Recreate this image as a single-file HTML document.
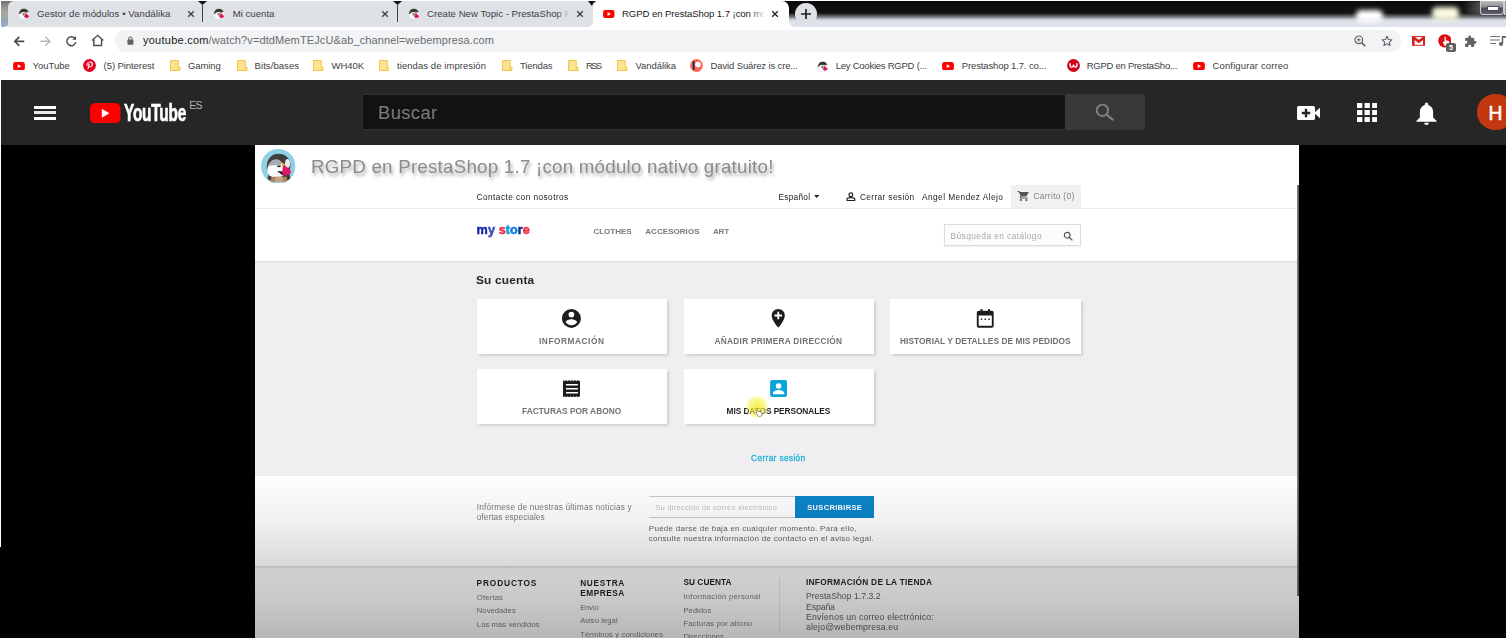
<!DOCTYPE html>
<html><head><meta charset="utf-8"><title>RGPD en PrestaShop 1.7</title>
<style>
*{margin:0;padding:0;box-sizing:border-box}
html,body{width:1506px;height:638px;overflow:hidden;background:#000;font-family:"Liberation Sans",sans-serif}
.a{position:absolute}
.t{position:absolute;white-space:nowrap;line-height:1}
#video{left:255px;top:145px;width:1044px;height:493px;background:#fff;overflow:hidden}
#vin{filter:blur(.4px)}
</style></head><body>
<div class="a" style="left:0px;top:0px;width:1506px;height:80px;background:#fff;"></div>
<div class="a" style="left:1px;top:1px;width:1505px;height:26px;background:#dee1e6;"></div>
<div class="a" style="left:1px;top:1px;width:12px;height:26px;background:linear-gradient(#6f6f6f 0,#9b9c9a 30%,#a9aaa6 50%,#94a0b6 78%,#9db4dc 100%);"></div>
<div class="a" style="left:8px;top:1px;width:12px;height:26px;background:#dee1e6;border-radius:6px 0 0 0"></div>
<svg class="a" style="left:4px;top:21px;" width="5" height="6" viewBox="0 0 5 6"><path d="M5 0v6H0C3 5.500 4.800 3.500 5 0z" fill="#dee1e6"/></svg>
<div class="a" style="left:786px;top:15px;width:12px;height:13px;background:#fff;"></div>
<div class="a" style="left:789px;top:1px;width:717px;height:26px;background:linear-gradient(#0b0b0b 0,#121212 46%,#6d7075 60%,#cfd3da 72%,#dfe4ec 80%,#dde2ea 100%);border-radius:0 0 0 6px"></div>
<div class="a" style="left:1356px;top:9.500px;width:27px;height:12px;background:#fff;filter:blur(2.800px);border-radius:5px"></div>
<div class="a" style="left:1432px;top:6.500px;width:27px;height:13px;background:#fbfbe2;filter:blur(2.800px);border-radius:5px"></div>
<div class="a" style="left:1462px;top:1px;width:20px;height:13px;background:linear-gradient(90deg,rgba(150,150,150,0),rgba(150,150,150,.55));filter:blur(1.500px)"></div>
<div class="a" style="left:1480px;top:1px;width:24px;height:13.5px;background:linear-gradient(#bdbdbd,#8a8a8a 48%,#4d4d57 52%,#5e5e66);border:1px solid #cfcfcf;border-top:0;border-radius:0 0 3px 3px"></div>
<div class="a" style="left:1504px;top:1px;width:2px;height:13.5px;background:#9a9a9a;border-left:1px solid #cfcfcf"></div>
<div class="a" style="left:1488.3px;top:7.3px;width:9.4px;height:3px;background:#fff;box-shadow:0 0 0 .8px #3a3f66"></div>
<div class="a" style="left:780px;top:1px;width:12px;height:12px;background:#0c0c0c;"></div>
<div class="a" style="left:593px;top:1px;width:196px;height:27px;background:#fff;border-radius:7px 7px 0 0"></div>
<div class="a" style="left:202px;top:5px;width:1px;height:17px;background:#3c4043;"></div>
<svg class="a" style="left:198px;top:1px;" width="9" height="4" viewBox="0 0 9 4"><path d="M0 0H9L4.5 4Z" fill="#111"/></svg>
<div class="a" style="left:397px;top:5px;width:1px;height:17px;background:#3c4043;"></div>
<svg class="a" style="left:393px;top:1px;" width="9" height="4" viewBox="0 0 9 4"><path d="M0 0H9L4.5 4Z" fill="#111"/></svg>
<svg class="a" style="left:588px;top:1px;" width="8" height="5" viewBox="0 0 8 5"><path d="M0 0H8L5 2.5 4 5Z" fill="#111"/></svg>
<div class="a" style="left:586px;top:20px;width:7px;height:7px;background:#fff;"></div>
<div class="a" style="left:580px;top:19px;width:13px;height:8px;background:#dee1e6;border-radius:0 0 6px 0"></div>
<svg class="a" style="left:18px;top:8px;" width="12" height="12" viewBox="0 0 24 24"><circle cx="12" cy="12" r="11.200" fill="#fbfbfb" stroke="#c3cad2" stroke-width="1"/><path d="M1.800 11C2.500 5 6.500 1.500 12 1.500c4.500 0 8 2.500 9.500 6.500l-6 1.500C12 7 7 7.500 3.500 12.500z" fill="#4a4a4a"/><path d="M5 5.500C7 3 10 2 13 2.300c2.500.300 4.500 1.500 6 3.200L6 8z" fill="#333"/><path d="M8.500 11.500c1.500-1.800 4-2 5.500-.500l-1 3.500-2.500 1z" fill="#777"/><path d="M12 16l2-1 .500 4.500z" fill="#2a2a2a"/><path d="M14.200 8.500l2.800 1.500-2.600 4.500z" fill="#f2a900"/><path d="M16.300 10.500l6.200 6-3 2.800-5 1.200-.800-6.500z" fill="#e6106b"/></svg>
<div class="t" style="left:37.00px;top:9px;font-size:9.6px;letter-spacing:0.080px;color:#3c4043;">Gestor de módulos • Vandálika</div>
<svg class="a" style="left:186.5px;top:10px;" width="8" height="8" viewBox="0 0 8 8"><path d="M1.2000000000000002 1.2000000000000002L6.8 6.8M6.8 1.2000000000000002L1.2000000000000002 6.8" stroke="#3c4043" stroke-width="1.3" fill="none"/></svg>
<svg class="a" style="left:213px;top:8px;" width="12" height="12" viewBox="0 0 24 24"><circle cx="12" cy="12" r="11.200" fill="#fbfbfb" stroke="#c3cad2" stroke-width="1"/><path d="M1.800 11C2.500 5 6.500 1.500 12 1.500c4.500 0 8 2.500 9.500 6.500l-6 1.500C12 7 7 7.500 3.500 12.500z" fill="#4a4a4a"/><path d="M5 5.500C7 3 10 2 13 2.300c2.500.300 4.500 1.500 6 3.200L6 8z" fill="#333"/><path d="M8.500 11.500c1.500-1.800 4-2 5.500-.500l-1 3.500-2.500 1z" fill="#777"/><path d="M12 16l2-1 .500 4.500z" fill="#2a2a2a"/><path d="M14.200 8.500l2.800 1.500-2.600 4.500z" fill="#f2a900"/><path d="M16.300 10.500l6.200 6-3 2.800-5 1.200-.800-6.500z" fill="#e6106b"/></svg>
<div class="t" style="left:232.70px;top:9px;font-size:9.6px;letter-spacing:0.022px;color:#3c4043;">Mi cuenta</div>
<svg class="a" style="left:381px;top:10px;" width="8" height="8" viewBox="0 0 8 8"><path d="M1.2000000000000002 1.2000000000000002L6.8 6.8M6.8 1.2000000000000002L1.2000000000000002 6.8" stroke="#3c4043" stroke-width="1.3" fill="none"/></svg>
<svg class="a" style="left:407.5px;top:8px;" width="12" height="12" viewBox="0 0 24 24"><circle cx="12" cy="12" r="11.200" fill="#fbfbfb" stroke="#c3cad2" stroke-width="1"/><path d="M1.800 11C2.500 5 6.500 1.500 12 1.500c4.500 0 8 2.500 9.500 6.500l-6 1.500C12 7 7 7.500 3.500 12.500z" fill="#4a4a4a"/><path d="M5 5.500C7 3 10 2 13 2.300c2.500.300 4.500 1.500 6 3.200L6 8z" fill="#333"/><path d="M8.500 11.500c1.500-1.800 4-2 5.500-.500l-1 3.500-2.500 1z" fill="#777"/><path d="M12 16l2-1 .500 4.500z" fill="#2a2a2a"/><path d="M14.200 8.500l2.800 1.500-2.600 4.500z" fill="#f2a900"/><path d="M16.300 10.500l6.200 6-3 2.800-5 1.200-.800-6.500z" fill="#e6106b"/></svg>
<div class="a" style="left:427px;top:4px;width:143px;height:20px;overflow:hidden">
<div class="t" style="left:0.00px;top:5px;font-size:9.6px;letter-spacing:0.027px;color:#3c4043;">Create New Topic - PrestaShop Fo</div>
<div class="a" style="right:0;top:0;width:14px;height:20px;background:linear-gradient(90deg,rgba(222,225,230,0),#dee1e6)"></div></div>
<svg class="a" style="left:576px;top:10px;" width="8" height="8" viewBox="0 0 8 8"><path d="M1.2000000000000002 1.2000000000000002L6.8 6.8M6.8 1.2000000000000002L1.2000000000000002 6.8" stroke="#3c4043" stroke-width="1.3" fill="none"/></svg>
<svg class="a" style="left:603px;top:10px;" width="11.5" height="8" viewBox="0 0 24 17"><rect width="24" height="17" rx="4.5" fill="#f00"/><path d="M9.5 4.5v8l7-4z" fill="#fff"/></svg>
<div class="a" style="left:622px;top:4px;width:143px;height:20px;overflow:hidden">
<div class="t" style="left:0.00px;top:5px;font-size:9.6px;letter-spacing:-0.087px;color:#202124;">RGPD en PrestaShop 1.7 ¡con mód</div>
<div class="a" style="right:0;top:0;width:14px;height:20px;background:linear-gradient(90deg,rgba(255,255,255,0),#fff)"></div></div>
<svg class="a" style="left:771px;top:10px;" width="8" height="8" viewBox="0 0 8 8"><path d="M1.2000000000000002 1.2000000000000002L6.8 6.8M6.8 1.2000000000000002L1.2000000000000002 6.8" stroke="#202124" stroke-width="1.3" fill="none"/></svg>
<div class="a" style="left:795px;top:3px;width:22px;height:22px;border-radius:11px;background:#dee1e6"></div>
<svg class="a" style="left:800px;top:8px;" width="12" height="12" viewBox="0 0 12 12"><path d="M6 1v10M1 6h10" stroke="#202124" stroke-width="1.7" fill="none"/></svg>
<svg class="a" style="left:12.7px;top:34.7px;" width="12.6" height="12.6" viewBox="0 0 14 14"><path d="M12.5 7H2.5M7 2L2 7l5 5" stroke="#4a4d51" stroke-width="1.85" fill="none"/></svg>
<svg class="a" style="left:38.7px;top:34.7px;" width="12.6" height="12.6" viewBox="0 0 14 14"><path d="M1.5 7h10M7 2l5 5-5 5" stroke="#b4b7bb" stroke-width="1.6" fill="none"/></svg>
<svg class="a" style="left:64.7px;top:34.7px;" width="12.6" height="12.6" viewBox="0 0 14 14"><path d="M11.3 4.2A5 5 0 1 0 12 8" stroke="#4a4d51" stroke-width="1.6" fill="none"/><path d="M12.3 1.2v4.2H8.1z" fill="#4a4d51"/></svg>
<svg class="a" style="left:90.8px;top:34.3px;" width="13.4" height="12.8" viewBox="0 0 15 15" preserveAspectRatio="none"><path d="M1.2 7.6L7.5 1.6l6.3 6M3.2 6.5v7h8.6v-7" stroke="#4a4d51" stroke-width="1.6" fill="none"/></svg>
<div class="a" style="left:115px;top:30px;width:1286px;height:22px;background:#f1f3f4;border-radius:11px"></div>
<svg class="a" style="left:127px;top:36.3px;" width="6.8" height="8.8" viewBox="0 0 8 10"><rect x="0.5" y="4" width="7" height="6" rx="0.8" fill="#5f6368"/><path d="M2 4.5V3a2 2 0 0 1 4 0v1.5" stroke="#5f6368" stroke-width="1.2" fill="none"/></svg>
<div class="t" style="left:143.00px;top:35px;font-size:11px;letter-spacing:0.252px;color:#202124;">youtube.com</div>
<div class="t" style="left:208.50px;top:35px;font-size:11px;letter-spacing:0.122px;color:#6a6d71;">/watch?v=dtdMemTEJcU&amp;ab_channel=webempresa.com</div>
<svg class="a" style="left:1354px;top:35px;" width="12" height="12" viewBox="0 0 12 12"><circle cx="4.8" cy="4.8" r="3.8" stroke="#5f6368" stroke-width="1.2" fill="none"/><path d="M7.6 7.6L11.3 11.3" stroke="#5f6368" stroke-width="1.5"/><path d="M4.8 3v3.6M3 4.8h3.6" stroke="#5f6368" stroke-width="1"/></svg>
<svg class="a" style="left:1380.5px;top:35px;" width="12" height="12" viewBox="0 0 24 24"><path d="M12 2.5l2.9 6.4 6.9.7-5.2 4.7 1.5 6.9L12 17.6 5.9 21.2l1.5-6.900-5.200-4.700 6.900-.700z" stroke="#5f6368" stroke-width="2.2" fill="none" stroke-linejoin="round"/></svg>
<svg class="a" style="left:1411.8px;top:35.8px;" width="13.6" height="9.9" viewBox="0 0 14 10"><rect x=".5" y=".5" width="13" height="9" fill="#fff" stroke="#d61f1f" stroke-width="1"/><path d="M1.300 9.500V1.300L7 5.600 12.700 1.300v8.200" stroke="#d61f1f" stroke-width="2.700" fill="none"/></svg>
<svg class="a" style="left:1437.6px;top:34.1px;" width="13.6" height="13.6" viewBox="0 0 15 15"><circle cx="7.500" cy="7.500" r="7.300" fill="#e00b0b"/><path d="M7.200 3.200c.400-.700 1.300-.500 1.400.300v3.300l2.700.600c.900.200 1.300.900 1.100 1.800l-.900 3.800H7.200L5.400 9.500c-.500-.800.400-1.500 1.100-.900l.700.700z" fill="#fff"/></svg>
<div class="a" style="left:1446px;top:43px;width:10px;height:9px;background:#5c5f63;border-radius:2px"></div>
<div class="t" style="left:1449.00px;top:44px;font-size:7px;letter-spacing:0.000px;color:#fff;font-weight:700;">5</div>
<svg class="a" style="left:1464px;top:35px;" width="13" height="13" viewBox="0 0 24 24"><path d="M20.500 11H19V7a2 2 0 0 0-2-2h-4V3.500a2.500 2.500 0 0 0-5 0V5H4a2 2 0 0 0-2 2v3.800h1.500a2.700 2.700 0 0 1 0 5.400H2V20a2 2 0 0 0 2 2h3.800v-1.500a2.700 2.700 0 0 1 5.400 0V22H17a2 2 0 0 0 2-2v-4h1.500a2.500 2.500 0 0 0 0-5z" fill="#5f6368"/></svg>
<svg class="a" style="left:1489.5px;top:35px;" width="17" height="12" viewBox="0 0 17 12"><path d="M0 1.500h10M0 5h10M0 8.500h6" stroke="#70757a" stroke-width="1.150"/><path d="M12.500 1v7.500" stroke="#5f6368" stroke-width="1.500"/><circle cx="11" cy="9" r="2" fill="#5f6368"/><path d="M12.500 1h3.500v1.800h-3.500z" fill="#5f6368"/></svg>
<svg class="a" style="left:13px;top:61.7px;" width="12" height="8.3" viewBox="0 0 24 17"><rect width="24" height="17" rx="4.5" fill="#f00"/><path d="M9.5 4.5v8l7-4z" fill="#fff"/></svg>
<div class="t" style="left:32.50px;top:61px;font-size:9.5px;letter-spacing:-0.022px;color:#3c4043;">YouTube</div>
<svg class="a" style="left:83px;top:59.2px;" width="13" height="13" viewBox="0 0 26 26"><circle cx="13" cy="13" r="12.800" fill="#e60023"/><path d="M13.300 5.500c-4.200 0-6.400 2.900-6.400 5.500 0 1.500.6 2.900 1.900 3.400.200.100.400 0 .500-.200l.200-.800c.100-.200 0-.300-.100-.500-.400-.500-.600-1-.600-1.900 0-2.400 1.800-4.500 4.600-4.500 2.500 0 3.900 1.500 3.900 3.600 0 2.700-1.200 5-3 5-1 0-1.700-.800-1.500-1.800.300-1.200.800-2.500.800-3.300 0-.800-.400-1.400-1.300-1.400-1 0-1.800 1-1.800 2.400 0 .900.300 1.500.300 1.500l-1.200 5.200c-.400 1.500-.100 3.400 0 3.600 0 .100.200.100.200 0 .100-.100 1.400-1.700 1.800-3.300l.700-2.700c.300.700 1.300 1.200 2.400 1.200 3.100 0 5.200-2.800 5.200-6.600 0-2.900-2.400-5.500-6.100-5.500z" fill="#fff"/></svg>
<div class="t" style="left:103.60px;top:61px;font-size:9.5px;letter-spacing:-0.078px;color:#3c4043;">(5) Pinterest</div>
<svg class="a" style="left:170px;top:60px;" width="10.5" height="11" viewBox="0 0 21 22"><path d="M1 1h15.500v13.500h3.500v6.500H1z" fill="#fde293" stroke="#f2c744" stroke-width="2" stroke-linejoin="round"/><path d="M16.500 14.500v6.500" stroke="#f2c744" stroke-width="1.500"/></svg>
<div class="t" style="left:188.00px;top:61px;font-size:9.5px;letter-spacing:-0.113px;color:#3c4043;">Gaming</div>
<svg class="a" style="left:237px;top:60px;" width="10.5" height="11" viewBox="0 0 21 22"><path d="M1 1h15.500v13.500h3.500v6.500H1z" fill="#fde293" stroke="#f2c744" stroke-width="2" stroke-linejoin="round"/><path d="M16.500 14.500v6.500" stroke="#f2c744" stroke-width="1.500"/></svg>
<div class="t" style="left:254.60px;top:61px;font-size:9.5px;letter-spacing:0.064px;color:#3c4043;">Bits/bases</div>
<svg class="a" style="left:313px;top:60px;" width="10.5" height="11" viewBox="0 0 21 22"><path d="M1 1h15.500v13.500h3.500v6.500H1z" fill="#fde293" stroke="#f2c744" stroke-width="2" stroke-linejoin="round"/><path d="M16.500 14.500v6.500" stroke="#f2c744" stroke-width="1.500"/></svg>
<div class="t" style="left:331.50px;top:61px;font-size:9.5px;letter-spacing:-0.058px;color:#3c4043;">WH40K</div>
<svg class="a" style="left:378.5px;top:60px;" width="10.5" height="11" viewBox="0 0 21 22"><path d="M1 1h15.500v13.500h3.500v6.500H1z" fill="#fde293" stroke="#f2c744" stroke-width="2" stroke-linejoin="round"/><path d="M16.500 14.500v6.500" stroke="#f2c744" stroke-width="1.500"/></svg>
<div class="t" style="left:397.00px;top:61px;font-size:9.5px;letter-spacing:0.071px;color:#3c4043;">tiendas de impresión</div>
<svg class="a" style="left:502px;top:60px;" width="10.5" height="11" viewBox="0 0 21 22"><path d="M1 1h15.500v13.500h3.500v6.500H1z" fill="#fde293" stroke="#f2c744" stroke-width="2" stroke-linejoin="round"/><path d="M16.500 14.500v6.500" stroke="#f2c744" stroke-width="1.500"/></svg>
<div class="t" style="left:520.00px;top:61px;font-size:9.5px;letter-spacing:-0.141px;color:#3c4043;">Tiendas</div>
<svg class="a" style="left:568px;top:60px;" width="10.5" height="11" viewBox="0 0 21 22"><path d="M1 1h15.500v13.500h3.500v6.500H1z" fill="#fde293" stroke="#f2c744" stroke-width="2" stroke-linejoin="round"/><path d="M16.500 14.500v6.500" stroke="#f2c744" stroke-width="1.500"/></svg>
<div class="t" style="left:586.00px;top:61px;font-size:9.5px;letter-spacing:-1.767px;color:#3c4043;">RSS</div>
<svg class="a" style="left:617px;top:60px;" width="10.5" height="11" viewBox="0 0 21 22"><path d="M1 1h15.500v13.500h3.500v6.500H1z" fill="#fde293" stroke="#f2c744" stroke-width="2" stroke-linejoin="round"/><path d="M16.500 14.500v6.500" stroke="#f2c744" stroke-width="1.500"/></svg>
<div class="t" style="left:635.50px;top:61px;font-size:9.5px;letter-spacing:-0.065px;color:#3c4043;">Vandálika</div>
<svg class="a" style="left:690px;top:59.2px;" width="13" height="13" viewBox="0 0 26 26"><circle cx="13" cy="13" r="12.800" fill="#f96854"/><rect x="5.500" y="4.500" width="3.500" height="17" fill="#052d49"/><circle cx="15.800" cy="11" r="5.600" fill="#fff"/></svg>
<div class="t" style="left:710.60px;top:61px;font-size:9.5px;letter-spacing:-0.137px;color:#3c4043;">David Suárez is cre...</div>
<svg class="a" style="left:816.5px;top:60.5px;" width="11.5" height="11.5" viewBox="0 0 24 24"><circle cx="12" cy="12" r="11.200" fill="#fbfbfb" stroke="#c3cad2" stroke-width="1"/><path d="M1.800 11C2.500 5 6.500 1.500 12 1.500c4.500 0 8 2.500 9.500 6.500l-6 1.500C12 7 7 7.500 3.500 12.500z" fill="#4a4a4a"/><path d="M5 5.500C7 3 10 2 13 2.300c2.500.300 4.500 1.500 6 3.200L6 8z" fill="#333"/><path d="M8.500 11.500c1.500-1.800 4-2 5.500-.500l-1 3.500-2.500 1z" fill="#777"/><path d="M12 16l2-1 .500 4.500z" fill="#2a2a2a"/><path d="M14.200 8.500l2.800 1.500-2.600 4.500z" fill="#f2a900"/><path d="M16.300 10.500l6.200 6-3 2.800-5 1.200-.800-6.500z" fill="#e6106b"/></svg>
<div class="t" style="left:835.70px;top:61px;font-size:9.5px;letter-spacing:-0.239px;color:#3c4043;">Ley Cookies RGPD (...</div>
<svg class="a" style="left:941.8px;top:61.7px;" width="12" height="8.3" viewBox="0 0 24 17"><rect width="24" height="17" rx="4.5" fill="#f00"/><path d="M9.5 4.5v8l7-4z" fill="#fff"/></svg>
<div class="t" style="left:961.80px;top:61px;font-size:9.5px;letter-spacing:-0.126px;color:#3c4043;">Prestashop 1.7. co...</div>
<svg class="a" style="left:1067px;top:59.2px;" width="13" height="13" viewBox="0 0 26 26"><circle cx="13" cy="13" r="12.800" fill="#d0021b"/><path d="M6.200 9.500c-.500 4 .500 7 3 7 2 0 3.300-1.500 3.800-4.500.500 3 1.800 4.500 3.800 4.500 2.500 0 3.500-3 3-7" stroke="#fff" stroke-width="2.900" fill="none" stroke-linejoin="round" stroke-linecap="round"/></svg>
<div class="t" style="left:1086.70px;top:61px;font-size:9.5px;letter-spacing:-0.261px;color:#3c4043;">RGPD en PrestaSho...</div>
<svg class="a" style="left:1192.8px;top:61.7px;" width="12" height="8.3" viewBox="0 0 24 17"><rect width="24" height="17" rx="4.5" fill="#f00"/><path d="M9.5 4.5v8l7-4z" fill="#fff"/></svg>
<div class="t" style="left:1212.60px;top:61px;font-size:9.5px;letter-spacing:0.117px;color:#3c4043;">Configurar correo</div>
<div class="a" style="left:1px;top:80px;width:1505px;height:65px;background:#262626;"></div>
<div class="a" style="left:34px;top:106px;width:22px;height:2.6px;background:#fff;"></div>
<div class="a" style="left:34px;top:111.3px;width:22px;height:2.6px;background:#e8e8e8;"></div>
<div class="a" style="left:34px;top:117px;width:22px;height:2.8px;background:#fff;"></div>
<svg class="a" style="left:90px;top:102.5px;" width="30.5" height="20.5" viewBox="0 0 30.500 20.500"><rect width="30.500" height="20.500" rx="5.200" fill="#f00"/><path d="M11.800 5.800v8.900l7.600-4.450z" fill="#fff"/></svg>
<div class="t" style="left:123.800px;top:101.400px;font-size:24.800px;font-weight:700;color:#fff;transform:scaleX(0.619);transform-origin:0 0;letter-spacing:-0.300px;-webkit-text-stroke:0.700px #fff">YouTube</div>
<div class="t" style="left:189.30px;top:100px;font-size:10.6px;letter-spacing:-0.839px;color:#b0b0b0;">ES</div>
<div class="a" style="left:361.6px;top:94.3px;width:704px;height:36.2px;background:#121212;border:1px solid #303030;border-radius:2.500px 0 0 2.500px"></div>
<div class="t" style="left:378.00px;top:104px;font-size:18.3px;letter-spacing:0.449px;color:#7c7c7c;">Buscar</div>
<div class="a" style="left:1065px;top:94.3px;width:79.8px;height:36.2px;background:#383838;border-radius:0 2.500px 2.500px 0"></div>
<svg class="a" style="left:1094px;top:102px;" width="22" height="22" viewBox="0 0 22 22"><circle cx="8.400" cy="8.300" r="5.700" stroke="#808080" stroke-width="1.900" fill="none"/><path d="M12.600 12.500l6.600 5.700" stroke="#808080" stroke-width="2.200"/></svg>
<svg class="a" style="left:1297px;top:106px;" width="23" height="14" viewBox="0 0 23 14"><rect width="18" height="14" rx="1.500" fill="#fff"/><path d="M17.500 6.500L23 1.800v10.400L17.500 7.500z" fill="#fff"/><path d="M9 2.800v8.400M4.800 7h8.400" stroke="#262626" stroke-width="2.400"/></svg>
<svg class="a" style="left:1356.8px;top:103px;" width="20.5" height="19.2" viewBox="0 0 20.500 19.200"><rect x="0.00" y="0.00" width="5.300" height="5" fill="#fff"/><rect x="7.55" y="0.00" width="5.300" height="5" fill="#fff"/><rect x="15.10" y="0.00" width="5.300" height="5" fill="#fff"/><rect x="0.00" y="7.05" width="5.300" height="5" fill="#fff"/><rect x="7.55" y="7.05" width="5.300" height="5" fill="#fff"/><rect x="15.10" y="7.05" width="5.300" height="5" fill="#fff"/><rect x="0.00" y="14.10" width="5.300" height="5" fill="#fff"/><rect x="7.55" y="14.10" width="5.300" height="5" fill="#fff"/><rect x="15.10" y="14.10" width="5.300" height="5" fill="#fff"/></svg>
<svg class="a" style="left:1415.5px;top:101.5px;" width="21" height="23" viewBox="0 0 21 23"><path d="M10.500 0.500a1.700 1.700 0 0 1 1.700 1.700v.8c3 .8 4.900 3.400 4.900 6.700v5.800l3.400 3.200v1.100H.500v-1.100l3.400-3.200V9.700c0-3.300 1.900-5.900 4.900-6.700v-.8A1.700 1.700 0 0 1 10.500.500z" fill="#fff"/><path d="M8.200 20.700h4.600a2.300 2.300 0 0 1-4.600 0z" fill="#fff"/></svg>
<div class="a" style="left:1477px;top:93.700px;width:36.800px;height:36.800px;border-radius:50%;background:#c1370e"></div>
<div class="t" style="left:1488.40px;top:104px;font-size:19.3px;letter-spacing:0.000px;color:#fff;-webkit-text-stroke:0.500px #fff">H</div>
<div class="a" id="video"><div class="a" id="vin" style="left:-255px;top:-145px;width:1506px;height:638px">
<div class="a" style="left:246px;top:261px;width:1063px;height:215px;background:#f0eef0;"></div>
<div class="a" style="left:246px;top:208px;width:1063px;height:1px;background:#ececec;"></div>
<div class="a" style="left:246px;top:261px;width:1063px;height:2px;background:linear-gradient(rgba(0,0,0,.10),rgba(0,0,0,0));"></div>
<div class="t" style="left:476.60px;top:193px;font-size:8.3px;letter-spacing:0.433px;color:#1c1c1c;">Contacte con nosotros</div>
<div class="t" style="left:778.50px;top:193px;font-size:8.3px;letter-spacing:0.251px;color:#1c1c1c;">Español</div>
<svg class="a" style="left:813.5px;top:195.3px;" width="5.4" height="3" viewBox="0 0 5.400 3"><path d="M0 0h5.400L2.700 3z" fill="#2b2b2b"/></svg>
<svg class="a" style="left:846.1px;top:191.6px;" width="9.8" height="9.8" viewBox="0 0 9.800 9.800"><circle cx="4.900" cy="2.700" r="1.900" stroke="#222" stroke-width="1.200" fill="none"/><path d="M1.100 8.700V6.900Q1.100 5.600 4.900 5.600Q8.700 5.600 8.700 6.900V8.700Z" stroke="#222" stroke-width="1.200" fill="none" stroke-linejoin="round"/></svg>
<div class="t" style="left:860.00px;top:193px;font-size:8.3px;letter-spacing:0.365px;color:#1c1c1c;">Cerrar sesión</div>
<div class="t" style="left:922.00px;top:193px;font-size:8.3px;letter-spacing:0.443px;color:#1c1c1c;">Angel Mendez Alejo</div>
<div class="a" style="left:1011px;top:185px;width:69.5px;height:23.3px;background:#f1f1f1;"></div>
<svg class="a" style="left:1017.2px;top:189.9px;" width="13.3" height="11.9" viewBox="0 0 24 24" preserveAspectRatio="none"><path d="M7 18a2 2 0 1 0 0 4 2 2 0 0 0 0-4zM1 2v2h2l3.600 7.600-1.400 2.400A2 2 0 0 0 7 17h12v-2H7.400a.250.250 0 0 1-.200-.400L8.100 13h7.400a2 2 0 0 0 1.800-1l3.600-6.500A1 1 0 0 0 20 4H5.200l-.900-2zm16 16a2 2 0 1 0 0 4 2 2 0 0 0 0-4z" fill="#555"/></svg>
<div class="t" style="left:1033.50px;top:192px;font-size:8.3px;letter-spacing:0.334px;color:#808080;">Carrito (0)</div>
<div class="t" style="left:476.600px;top:224.300px;font-size:12.600px;font-weight:700;letter-spacing:0.100px;-webkit-text-stroke:0.550px currentColor"><span style="color:#1b2ba6">m</span><span style="color:#3a4cc0">y</span> <span style="color:#ee3048">s</span><span style="color:#0a9de0">t</span><span style="color:#0b7fd8">o</span><span style="color:#1a2ea0">r</span><span style="color:#ee3040">e</span></div>
<div class="t" style="left:593.40px;top:228px;font-size:8px;letter-spacing:0.013px;color:#7a7a7a;font-weight:700;">CLOTHES</div>
<div class="t" style="left:645.30px;top:228px;font-size:8px;letter-spacing:0.046px;color:#7a7a7a;font-weight:700;">ACCESORIOS</div>
<div class="t" style="left:712.90px;top:228px;font-size:8px;letter-spacing:-0.071px;color:#7a7a7a;font-weight:700;">ART</div>
<div class="a" style="left:944.3px;top:224.3px;width:136.4px;height:22px;background:#fcfcfc;border:1px solid #dcdcdc;box-shadow:0 1px 1px rgba(0,0,0,.05)"></div>
<div class="t" style="left:950.50px;top:232px;font-size:8.4px;letter-spacing:0.405px;color:#a8a8a8;">Búsqueda en catálogo</div>
<svg class="a" style="left:1063.3px;top:230.5px;" width="10.5" height="10.5" viewBox="0 0 24 24"><circle cx="9.500" cy="9.500" r="6.500" stroke="#555" stroke-width="2.600" fill="none"/><path d="M14.500 14.500l7 7" stroke="#555" stroke-width="3"/></svg>
<div class="t" style="left:476.40px;top:276px;font-size:10px;letter-spacing:0.150px;color:#262626;font-weight:700;transform:scaleX(1.1879);transform-origin:0 0;">Su cuenta</div>
<div class="a" style="left:477px;top:299px;width:190.2px;height:55px;background:#fff;box-shadow:1.500px 1.500px 3px rgba(0,0,0,.16)"></div>
<div class="a" style="left:684px;top:299px;width:190.2px;height:55px;background:#fff;box-shadow:1.500px 1.500px 3px rgba(0,0,0,.16)"></div>
<div class="a" style="left:890.3px;top:299px;width:190.4px;height:55px;background:#fff;box-shadow:1.500px 1.500px 3px rgba(0,0,0,.16)"></div>
<div class="a" style="left:477px;top:369px;width:190.2px;height:55px;background:#fff;box-shadow:1.500px 1.500px 3px rgba(0,0,0,.16)"></div>
<div class="a" style="left:684px;top:369px;width:190.2px;height:55px;background:#fff;box-shadow:1.500px 1.500px 3px rgba(0,0,0,.16)"></div>
<svg class="a" style="left:560.2px;top:306.6px;" width="22.8" height="22.8" viewBox="0 0 24 24"><path d="M12 2a10 10 0 1 0 0 20 10 10 0 0 0 0-20zm0 3a3 3 0 1 1 0 6 3 3 0 0 1 0-6zm0 14.200a7.200 7.200 0 0 1-6-3.220c.030-2 4-3.080 6-3.080s5.970 1.090 6 3.080a7.200 7.200 0 0 1-6 3.220z" fill="#1d1d1d"/></svg>
<div class="t" style="left:539.00px;top:337px;font-size:8.3px;letter-spacing:0.552px;color:#707070;font-weight:700;">INFORMACIÓN</div>
<svg class="a" style="left:767.2px;top:306.7px;" width="22.5" height="22.5" viewBox="0 0 24 24"><path d="M12 2a7 7 0 0 0-7 7c0 5.250 7 13 7 13s7-7.750 7-13a7 7 0 0 0-7-7zm4 8h-3v3h-2v-3H8V8h3V5h2v3h3z" fill="#1d1d1d"/></svg>
<div class="t" style="left:714.60px;top:337px;font-size:8.3px;letter-spacing:0.260px;color:#707070;font-weight:700;">AÑADIR PRIMERA DIRECCIÓN</div>
<svg class="a" style="left:974.1px;top:308px;" width="22.5" height="22.5" viewBox="0 0 24 24"><path d="M17 3V1h-2v2H9V1H7v2H5a2 2 0 0 0-2 2v14a2 2 0 0 0 2 2h14a2 2 0 0 0 2-2V5a2 2 0 0 0-2-2zm2 16H5V8h14zM7.300 11.300h1.500v1.500H7.300zm4 0h1.500v1.500h-1.500zm4 0h1.500v1.500h-1.500z" fill="#1d1d1d"/></svg>
<div class="t" style="left:900.00px;top:337px;font-size:8.3px;letter-spacing:0.079px;color:#707070;font-weight:700;">HISTORIAL Y DETALLES DE MIS PEDIDOS</div>
<svg class="a" style="left:562.6px;top:379.5px;" width="17.9" height="17.5" viewBox="3 2 18 20" preserveAspectRatio="none"><path d="M3 2l1.500 1.500L6 2l1.500 1.500L9 2l1.500 1.500L12 2l1.500 1.500L15 2l1.500 1.500L18 2l1.500 1.500L21 2v20l-1.500-1.500L18 22l-1.500-1.500L15 22l-1.500-1.500L12 22l-1.500-1.500L9 22l-1.500-1.500L6 22l-1.500-1.500L3 22z" fill="#1d1d1d"/><path d="M6 7.500h12M6 12h12M6 16.500h12" stroke="#fff" stroke-width="1.700"/></svg>
<div class="t" style="left:522.00px;top:407px;font-size:8.3px;letter-spacing:0.049px;color:#707070;font-weight:700;">FACTURAS POR ABONO</div>
<svg class="a" style="left:769.8px;top:380px;" width="17.2" height="17" viewBox="0 0 18 18"><rect width="18" height="18" rx="2.400" fill="#0aa5d8"/><circle cx="9" cy="6.300" r="2.900" fill="#fff"/><path d="M3 15v-1.300c0-2 4-3.100 6-3.100s6 1.100 6 3.100V15z" fill="#fff"/></svg>
<div class="t" style="left:726.60px;top:407px;font-size:8.3px;letter-spacing:-0.060px;color:#1e1e1e;font-weight:700;">MIS DATOS PERSONALES</div>
<div class="a" style="left:745.700px;top:395.500px;width:22px;height:22px;border-radius:50%;background:radial-gradient(circle,rgba(243,233,40,.8) 0,rgba(246,238,60,.62) 45%,rgba(252,246,130,.25) 75%,rgba(255,255,255,0) 100%)"></div>
<svg class="a" style="left:755.3px;top:408.2px;" width="8" height="9" viewBox="0 0 9 10"><path d="M1 2.200c.800-.600 1.600 0 2 .700l.700 1.200 1-.300 1 .400 1-.100c.900.200 1.300.900 1.200 1.800l-.400 2.300c-.100.700-.600 1.100-1.300 1.100H4.300c-.600 0-1-.300-1.300-.800L1.200 5.800c-.600-.900.300-1.500 1-.800L1.500 3.600C1 2.900.700 2.500 1 2.200z" fill="#fff" stroke="#555" stroke-width=".7"/></svg>
<div class="t" style="left:751.10px;top:454px;font-size:8.3px;letter-spacing:0.357px;color:#1cb3d6;-webkit-text-stroke:0.300px #1cb3d6">Cerrar sesión</div>
<div class="a" style="left:246px;top:476px;width:1063px;height:91px;background:#fff;"></div>
<div class="t" style="left:476.70px;top:503px;font-size:8.3px;letter-spacing:0.180px;color:#7a7a7a;">Infórmese de nuestras últimas noticias y</div>
<div class="t" style="left:476.70px;top:513px;font-size:8.3px;letter-spacing:0.065px;color:#7a7a7a;">ofertas especiales</div>
<div class="a" style="left:648.8px;top:496px;width:146.2px;height:22px;background:#fff;border-top:1px solid #c9c9c9;border-bottom:1px solid #c9c9c9"></div>
<div class="t" style="left:655.50px;top:504px;font-size:7.2px;letter-spacing:0.384px;color:#bdbdbd;">Su dirección de correo electrónico</div>
<div class="a" style="left:794.9px;top:496px;width:79.4px;height:22px;background:#0b84c9;"></div>
<div class="t" style="left:807.30px;top:504px;font-size:7.5px;letter-spacing:0.324px;color:#fff;font-weight:700;">SUSCRIBIRSE</div>
<div class="t" style="left:648.80px;top:525px;font-size:8px;letter-spacing:0.277px;color:#646464;">Puede darse de baja en cualquier momento. Para ello,</div>
<div class="t" style="left:648.80px;top:535px;font-size:8px;letter-spacing:0.293px;color:#646464;">consulte nuestra información de contacto en el aviso legal.</div>
<div class="a" style="left:246px;top:567px;width:1063px;height:71px;background:#f6f6f6;"></div>
<div class="a" style="left:246px;top:566px;width:1063px;height:3px;background:linear-gradient(rgba(0,0,0,.16),rgba(0,0,0,0));"></div>
<div class="t" style="left:476.60px;top:579px;font-size:8.3px;letter-spacing:0.865px;color:#1f1f1f;font-weight:700;">PRODUCTOS</div>
<div class="t" style="left:476.80px;top:594px;font-size:7.7px;letter-spacing:0.159px;color:#767676;">Ofertas</div>
<div class="t" style="left:476.80px;top:607px;font-size:7.7px;letter-spacing:0.005px;color:#767676;">Novedades</div>
<div class="t" style="left:476.80px;top:621px;font-size:7.7px;letter-spacing:0.056px;color:#767676;">Los más vendidos</div>
<div class="t" style="left:580.20px;top:579px;font-size:8.3px;letter-spacing:0.665px;color:#1f1f1f;font-weight:700;">NUESTRA</div>
<div class="t" style="left:580.20px;top:589px;font-size:8.3px;letter-spacing:0.510px;color:#1f1f1f;font-weight:700;">EMPRESA</div>
<div class="t" style="left:580.20px;top:604px;font-size:7.7px;letter-spacing:-0.273px;color:#767676;">Envío</div>
<div class="t" style="left:580.20px;top:617px;font-size:7.7px;letter-spacing:0.040px;color:#767676;">Aviso legal</div>
<div class="t" style="left:580.20px;top:631px;font-size:7.7px;letter-spacing:0.101px;color:#767676;">Términos y condiciones</div>
<div class="t" style="left:683.40px;top:578px;font-size:8.3px;letter-spacing:0.050px;color:#1f1f1f;font-weight:700;">SU CUENTA</div>
<div class="t" style="left:683.40px;top:593px;font-size:7.7px;letter-spacing:0.273px;color:#767676;">Información personal</div>
<div class="t" style="left:683.40px;top:607px;font-size:7.7px;letter-spacing:0.012px;color:#767676;">Pedidos</div>
<div class="t" style="left:683.40px;top:620px;font-size:7.7px;letter-spacing:0.119px;color:#767676;">Facturas por abono</div>
<div class="t" style="left:683.40px;top:633px;font-size:7.7px;letter-spacing:0.037px;color:#767676;">Direcciones</div>
<div class="a" style="left:778.5px;top:577.5px;width:1px;height:54px;background:#e0e0e0;"></div>
<div class="t" style="left:806.00px;top:578px;font-size:8.3px;letter-spacing:0.279px;color:#1f1f1f;font-weight:700;">INFORMACIÓN DE LA TIENDA</div>
<div class="t" style="left:806.00px;top:592px;font-size:8.7px;letter-spacing:0.012px;color:#5a5a5a;">PrestaShop 1.7.3.2</div>
<div class="t" style="left:806.00px;top:603px;font-size:8.7px;letter-spacing:-0.102px;color:#5a5a5a;">España</div>
<div class="t" style="left:806.00px;top:613px;font-size:8.7px;letter-spacing:0.181px;color:#5a5a5a;">Envíenos un correo electrónico:</div>
<div class="t" style="left:806.00px;top:623px;font-size:8.7px;letter-spacing:0.171px;color:#5a5a5a;">alejo@webempresa.eu</div>
<div class="a" style="left:1296.8px;top:185px;width:2.2px;height:411px;background:linear-gradient(90deg,#909090,#484848);"></div>
<div class="a" style="left:246px;top:440px;width:1063px;height:198px;background:linear-gradient(rgba(0,0,0,0) 0,rgba(0,0,0,0) 18%,rgba(0,0,0,.018) 25%,rgba(0,0,0,.055) 40%,rgba(0,0,0,.148) 64%,rgba(0,0,0,.19) 81%,rgba(0,0,0,.255) 100%);"></div>
<div class="a" style="left:246px;top:145px;width:1063px;height:50px;background:linear-gradient(rgba(0,0,0,.0),rgba(0,0,0,0));"></div>
<svg class="a" style="left:261px;top:148.5px;" width="34.5" height="34.5" viewBox="0 0 34.500 34.500"><defs><clipPath id="avc"><circle cx="17.250" cy="17.250" r="17.250"/></clipPath></defs><g clip-path="url(#avc)"><rect width="34.500" height="34.500" fill="#90d1e7"/><path d="M5.800 20C5 11 10 4.800 17.300 4.800c7 0 12.300 4.500 12.200 11.700l-1 8 .800 5.500-3 1.500H9l-2.500-1.800 1.200-4.700z" fill="#3d3e40"/><path d="M6.300 21.500c0-5.500 3.300-10.500 8.700-10.500 3.800 0 6.300 2.200 7 6l.800 9.500c-3.500 2.600-11.300 2.600-14.500 0-1.300-1.100-2-2.900-2-5z" fill="#fdfdfd"/><path d="M7.200 17.500c.800-4.200 4-7.300 8-7.300 2.700 0 4.500 1.300 5.300 3.600l-1 3.200c-4-1.300-8.800-.800-12.300 .5z" fill="#a9acb1"/><ellipse cx="26.500" cy="14.600" rx="2.500" ry="4.600" fill="#ececec"/><path d="M16.300 16.900q1.700 1.300 3.300-.200" stroke="#222" stroke-width="1.300" fill="none"/><path d="M16 22c2 1.700 4 3 6.800 5.300l-.600-4.800z" fill="#1f1f1f"/><path d="M20.800 13.300l3.300 2-2.300 4.600z" fill="#f5a31d"/><path d="M22.600 16.400c3.200 1 6.700 3.700 7.800 6.600-1.800 2.400-4.800 3.700-8.200 3.600-1.300-3.200-.900-7.300.400-10.200z" fill="#e3136b"/><path d="M10.500 27.800h15l1.200 5.200h-17.400z" fill="#a98463"/><path d="M14.500 27.800h7l.600 5.200h-8.200z" fill="#c5a384"/></g></svg>
<div class="t" style="left:311.00px;top:158px;font-size:18.6px;letter-spacing:0.250px;color:#8c8c8c;transform:scaleX(1.0051);transform-origin:0 0;text-shadow:1.500px 2.500px 3.500px rgba(0,0,0,.36)">RGPD en PrestaShop 1.7 ¡con módulo nativo gratuito!</div>
</div></div>
<div class="a" style="left:0px;top:0px;width:1px;height:547px;background:#fff;"></div>
</body></html>
